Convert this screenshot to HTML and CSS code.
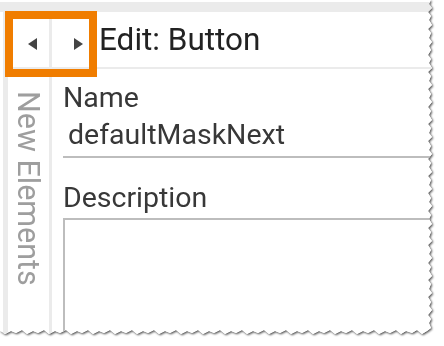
FILE: index.html
```html
<!DOCTYPE html>
<html lang="en">
<head>
    <meta charset="UTF-8">
    <title>Edit: Button</title>
    <link rel="stylesheet" href="styles.css">
</head>
<body>
    <div class="page">
        <div class="sheet">
            <div class="top-strip"></div>
            <div class="panel">
                <div class="toolbar">
                    <div class="nav-btn prev">
                        <svg width="9" height="12" viewBox="0 0 9 12"><polygon points="9,0 9,12 0,6" fill="#444"/></svg>
                    </div>
                    <div class="nav-btn next">
                        <svg width="9" height="12" viewBox="0 0 9 12"><polygon points="0,0 0,12 9,6" fill="#444"/></svg>
                    </div>
                    <h1 class="title">Edit: Button</h1>
                </div>
                <div class="body">
                    <aside class="sidebar">
                        <span class="sidebar-label">New Elements</span>
                    </aside>
                    <div class="content">
                        <div class="label">Name</div>
                        <div class="field-input">defaultMaskNext</div>
                        <div class="label label-spaced">Description</div>
                        <div class="field-area"></div>
                    </div>
                </div>
            </div>
        </div>
        <div class="highlight"></div>
    </div>
</body>
</html>
```

FILE: styles.css
```css
:root {
    --strip-color: #ebebeb;
    --line-color: #bdbdbd;
    --text-color: #383838;
    --title-color: #222;
    --muted-color: #9e9e9e;
    --accent-color: #f07d00;
    --font-family: Roboto, "Liberation Sans", Arial, sans-serif;
}
html, body {
    margin: 0;
    background-color: #fff;
    font-family: var(--font-family);
    overflow: hidden;
}
/* --- torn paper sheet --- */
.page {
    position: relative;
    width: 444px;
    height: 346px;
    filter: drop-shadow(1px 1px 1px rgba(0, 0, 0, 0.7));
}
.sheet {
    width: 440px;
    height: 340px;
    background-color: #fff;
    padding-top: 2px;
    box-sizing: border-box;
    overflow: hidden;
    display: flex;
    flex-direction: column;
    clip-path: polygon(0 0, 431px 0, 429px 4px, 432px 8px, 428px 12px, 431px 16px, 429px 20px, 432px 25px, 428px 29px, 431px 33px, 429px 38px, 432px 42px, 429px 46px, 431px 50px, 428px 55px, 431px 59px, 429px 63px, 432px 68px, 428px 72px, 431px 76px, 429px 81px, 432px 85px, 428px 89px, 431px 94px, 429px 98px, 432px 102px, 428px 107px, 431px 111px, 429px 115px, 432px 120px, 428px 124px, 431px 128px, 429px 133px, 432px 137px, 428px 141px, 431px 146px, 429px 150px, 432px 154px, 428px 159px, 431px 163px, 429px 167px, 432px 172px, 428px 176px, 431px 180px, 429px 185px, 432px 189px, 428px 193px, 431px 198px, 429px 202px, 432px 206px, 428px 211px, 431px 215px, 429px 219px, 432px 224px, 428px 228px, 431px 232px, 429px 237px, 432px 241px, 428px 245px, 431px 250px, 429px 254px, 432px 258px, 428px 263px, 431px 267px, 429px 271px, 432px 276px, 428px 280px, 431px 284px, 429px 289px, 432px 293px, 428px 297px, 431px 302px, 429px 306px, 432px 310px, 428px 315px, 431px 319px, 429px 323px, 431px 328px, 427px 331px, 422px 334px, 417px 330px, 412px 333px, 406px 331px, 401px 334px, 396px 330px, 390px 333px, 385px 331px, 379px 334px, 374px 330px, 368px 333px, 363px 331px, 357px 334px, 352px 330px, 346px 333px, 341px 331px, 335px 334px, 330px 330px, 324px 333px, 319px 331px, 313px 334px, 308px 330px, 302px 333px, 297px 331px, 291px 334px, 286px 330px, 280px 333px, 275px 331px, 269px 334px, 264px 330px, 258px 333px, 253px 331px, 247px 334px, 242px 330px, 236px 333px, 231px 331px, 225px 334px, 220px 330px, 214px 333px, 209px 331px, 203px 334px, 198px 330px, 192px 333px, 187px 331px, 181px 334px, 176px 330px, 170px 333px, 165px 331px, 159px 334px, 154px 330px, 148px 333px, 143px 331px, 137px 334px, 132px 330px, 126px 333px, 121px 331px, 115px 334px, 110px 330px, 104px 333px, 99px 331px, 93px 334px, 88px 330px, 82px 333px, 77px 331px, 71px 334px, 66px 330px, 60px 333px, 55px 331px, 49px 334px, 44px 330px, 38px 333px, 33px 331px, 27px 334px, 22px 330px, 16px 333px, 11px 331px, 5px 334px, 0 331px);
}
.top-strip {
    height: 10px;
    flex-shrink: 0;
    background-color: var(--strip-color);
}
.panel {
    flex: 1;
    min-height: 0;
    display: flex;
    flex-direction: column;
    margin-left: 3px;
    border-left: 5px solid var(--strip-color);
    background-color: #fff;
}
/* --- toolbar --- */
.toolbar {
    display: flex;
    align-items: center;
    flex-shrink: 0;
    height: 55px;
    border-bottom: 2px solid var(--strip-color);
}
.nav-btn {
    display: flex;
    justify-content: center;
    align-items: center;
    height: 100%;
    padding-top: 9px;
    box-sizing: border-box;
}
.nav-btn.prev {
    width: 44px;
    padding-left: 8px;
    border-right: 3px solid var(--strip-color);
}
.nav-btn.next {
    width: 36px;
    padding-left: 17px;
}
.title {
    margin: 0 0 0 11px;
    font-size: 31.5px;
    font-weight: 400;
    color: var(--title-color);
    white-space: nowrap;
}
/* --- body --- */
.body {
    flex: 1;
    display: flex;
    min-height: 0;
}
.sidebar {
    width: 41px;
    flex-shrink: 0;
    border-right: 3px solid var(--strip-color);
    display: flex;
    justify-content: center;
    padding-top: 22px;
}
.sidebar-label {
    writing-mode: vertical-rl;
    font-size: 30.5px;
    line-height: 31px;
    color: var(--muted-color);
    white-space: nowrap;
}
.content {
    flex: 1;
    padding: 13px 0 0 11px;
    min-width: 0;
}
.label {
    font-size: 28.5px;
    line-height: 32px;
    color: var(--text-color);
}
.label-spaced {
    margin-top: 24px;
}
.field-input {
    font-size: 28.5px;
    line-height: 32px;
    color: var(--text-color);
    padding: 5px 0 5px 5px;
    border-bottom: 2px solid var(--line-color);
    white-space: nowrap;
}
.field-area {
    margin-top: 4px;
    width: calc(100% + 20px);
    height: 200px;
    border: 2px solid var(--line-color);
}
/* --- annotation --- */
.highlight {
    position: absolute;
    left: 5px;
    top: 11px;
    width: 76px;
    height: 50px;
    border: 8px solid var(--accent-color);
}
```
